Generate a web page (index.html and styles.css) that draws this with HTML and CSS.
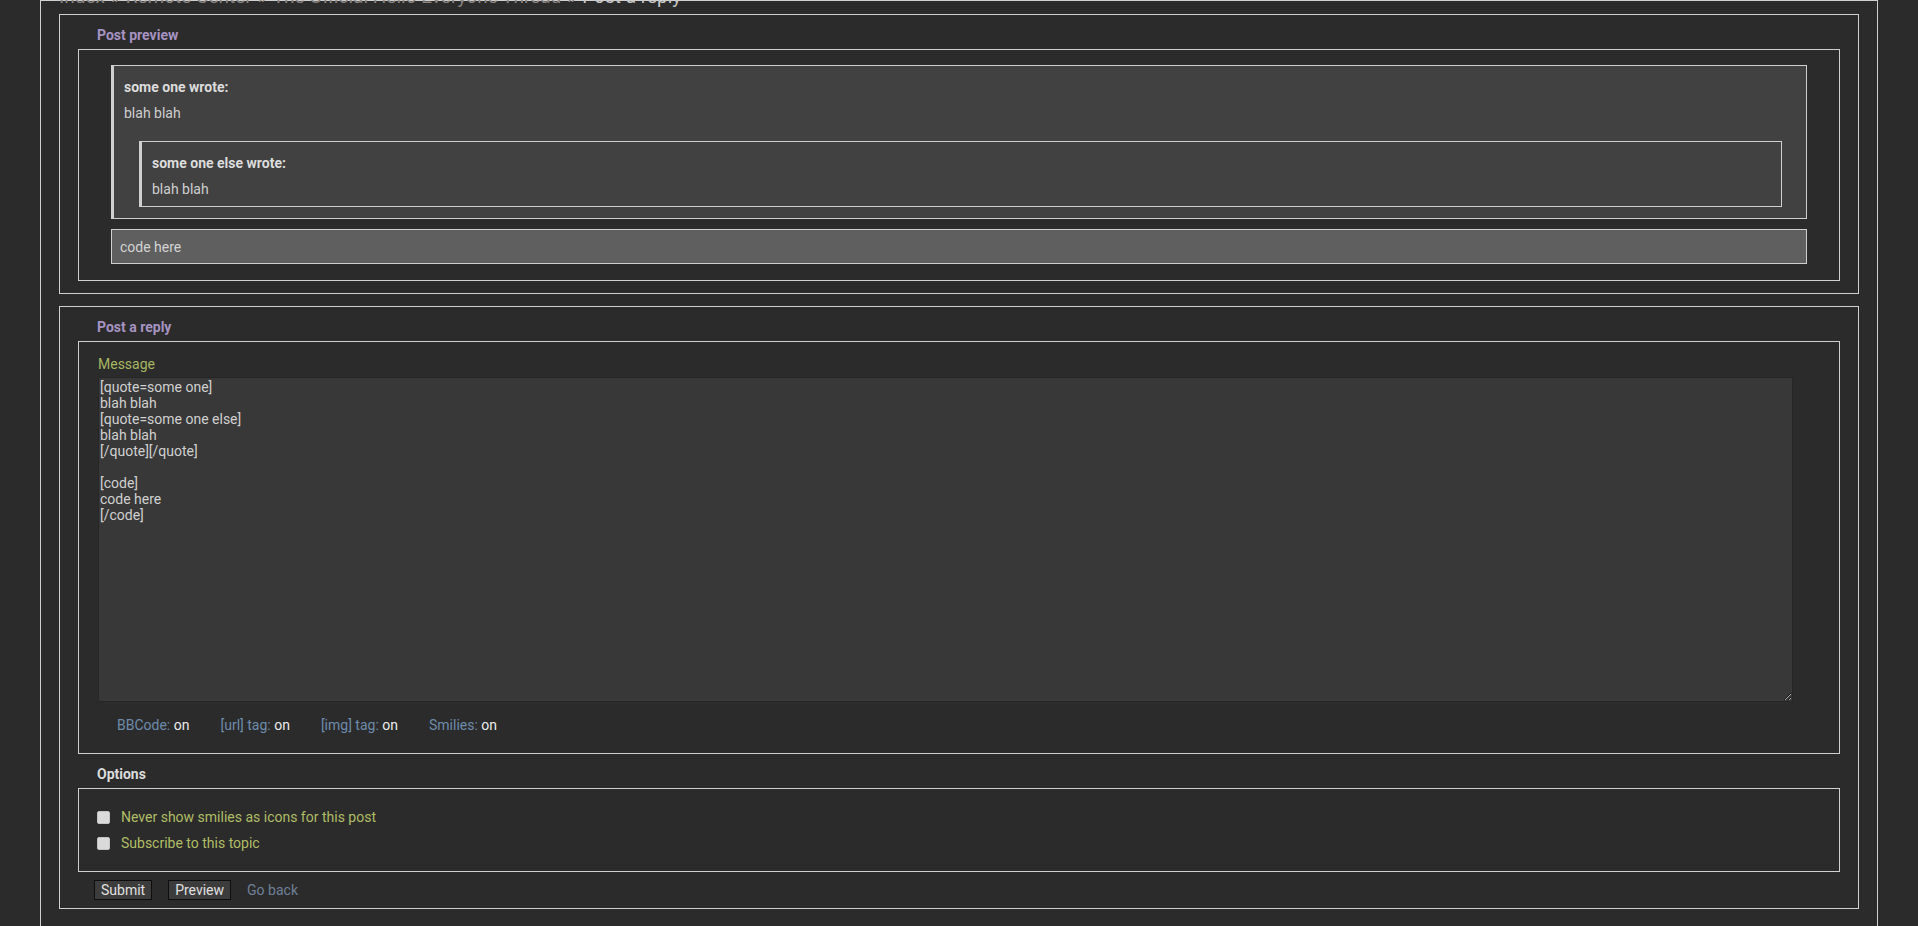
FILE: index.html
```html
<!DOCTYPE html>
<html lang="en">
<head>
<meta charset="utf-8">
<title>Post a reply</title>
<link rel="stylesheet" href="styles.css">
</head>
<body>
<div class="wrap">
  <div class="crumbs"><a href="#">Index</a><span class="sep">»</span><a href="#">Remote Center</a><span class="sep">»</span><a href="#">The Official Hello Everyone Thread</a><span class="sep">»</span><strong>Post a reply</strong></div>

  <div class="block preview">
    <h2 class="legend">Post preview</h2>
    <div class="box preview-box">
      <div class="quote">
        <cite class="cite">some one wrote:</cite>
        <p class="qtext">blah blah</p>
        <div class="quote nested">
          <cite class="cite">some one else wrote:</cite>
          <p class="qtext">blah blah</p>
        </div>
      </div>
      <div class="code">code here</div>
    </div>
  </div>

  <div class="block reply">
    <h2 class="legend">Post a reply</h2>
    <div class="box reply-box">
      <label class="msg-label" for="msg">Message</label>
      <textarea id="msg" class="msg">[quote=some one]
blah blah
[quote=some one else]
blah blah
[/quote][/quote]

[code]
code here
[/code]</textarea>
      <ul class="bblinks">
        <li><span class="k">BBCode:</span> <span class="v">on</span></li>
        <li><span class="k">[url] tag:</span> <span class="v">on</span></li>
        <li><span class="k">[img] tag:</span> <span class="v">on</span></li>
        <li><span class="k">Smilies:</span> <span class="v">on</span></li>
      </ul>
    </div>
    <h3 class="legend options-legend">Options</h3>
    <div class="box options-box">
      <label class="opt"><input type="checkbox" class="cb"><span>Never show smilies as icons for this post</span></label>
      <label class="opt"><input type="checkbox" class="cb"><span>Subscribe to this topic</span></label>
    </div>
    <div class="actions">
      <button class="btn" type="button">Submit</button>
      <button class="btn" type="button">Preview</button>
      <a class="goback" href="#">Go back</a>
    </div>
  </div>
</div>
</body>
</html>
```

FILE: styles.css
```css
* { box-sizing: border-box; }
html, body {
  margin: 0;
  padding: 0;
  background: #2b2b2b;
  overflow: hidden;
}
body {
  font-family: Roboto, "Liberation Sans", sans-serif;
  font-size: 14px;
  line-height: 16px;
  color: #d0d0d0;
}
.wrap {
  margin: 0 40px;
  border: 1px solid #cfcfcf;
  border-bottom: none;
  padding: 0 18px 60px;
  min-height: 960px;
}
.crumbs {
  margin-top: -14px;
  font-size: 19px;
  line-height: 20px;
  color: #8a8480;
  white-space: nowrap;
}
.crumbs a { color: #8a8480; text-decoration: none; }
.crumbs .sep { color: #8a8480; margin: 0 6px; }
.crumbs strong { font-weight: normal; color: #c8c8c8; }

.block {
  border: 1px solid #cfcfcf;
  padding: 0 18px;
}
.preview { margin-top: 7px; padding-bottom: 12px; }
.reply { margin-top: 12px; padding-bottom: 8px; }

.legend {
  margin: 0 0 6px;
  padding: 12px 0 0 19px;
  font-size: 14px;
  line-height: 16px;
  font-weight: bold;
  color: #a693c2;
}
.options-legend {
  color: #dcdcdc;
  padding-top: 12px;
}

.box {
  border: 1px solid #cfcfcf;
}
.preview-box {
  padding: 15px 32px 16px;
}
.quote {
  background: #414141;
  border: 1px solid #cfcfcf;
  border-left-width: 3px;
  padding: 13px 10px 9px;
}
.quote.nested {
  margin: 20px 14px 2px 15px;
}
.cite {
  display: block;
  font-style: normal;
  font-weight: bold;
  color: #dcdcdc;
}
.qtext {
  margin: 10px 0 0;
  color: #cfcfcf;
}
.code {
  margin-top: 10px;
  background: #5f5f5f;
  border: 1px solid #cfcfcf;
  padding: 9px 8px 8px;
  color: #d4d4d4;
}

.reply-box {
  padding: 14px 18px 20px;
}
.msg-label {
  display: block;
  color: #a6b661;
  margin-bottom: 5px;
  padding-left: 1px;
}
.msg {
  display: block;
  width: 1695px;
  height: 325px;
  margin: 0 0 0 1px;
  padding: 1px;
  background: #383838;
  border: 1px solid #262626;
  color: #d0d0d0;
  font-family: Roboto, "Liberation Sans", sans-serif;
  font-size: 14px;
  line-height: 16px;
  outline: none;
}
.bblinks {
  list-style: none;
  margin: 15px 0 0 20px;
  padding: 0;
  display: flex;
  gap: 31px;
}
.bblinks .k { color: #6e8cab; }
.bblinks .v { color: #ececec; }

.options-box {
  padding: 20px 18px 20px;
  display: flex;
  flex-direction: column;
  gap: 10px;
}
.opt {
  display: flex;
  align-items: center;
  height: 16px;
  color: #b0bd66;
}
.cb {
  appearance: none;
  -webkit-appearance: none;
  width: 13px;
  height: 13px;
  margin: 1px 11px 0 0;
  background: #dadada;
  border: 1px solid #c4c4c4;
  border-radius: 2px;
  flex: none;
}

.actions {
  margin-top: 8px;
  display: flex;
  align-items: center;
  gap: 16px;
  padding-left: 16px;
}
.btn {
  font-family: Roboto, "Liberation Sans", sans-serif;
  font-size: 14px;
  line-height: 16px;
  height: 20px;
  padding: 1px 6px;
  background: #3c3c3c;
  color: #e0e0e0;
  border: 1px solid #0e0e0e;
  border-radius: 0;
}
.goback {
  color: #6f8199;
  text-decoration: none;
}
```
